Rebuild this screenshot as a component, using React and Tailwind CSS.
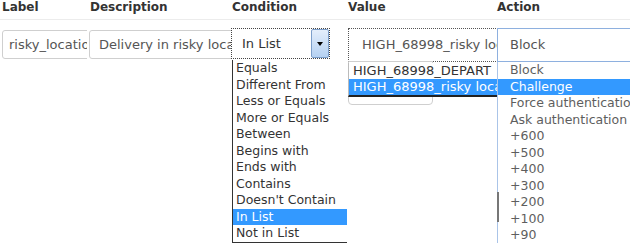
import React from 'react';

const conditions = ['Equals', 'Different From', 'Less or Equals', 'More or Equals', 'Between', 'Begins with', 'Ends with', 'Contains', "Doesn't Contain", 'In List', 'Not in List'];
const values = ['HIGH_68998_DEPART', 'HIGH_68998_risky location'];
const actions = ['Block', 'Challenge', 'Force authentication', 'Ask authentication', '+600', '+500', '+400', '+300', '+200', '+100', '+90'];

export default function App() {
    return (
        <div className="relative w-[630px] h-[243px] overflow-hidden bg-white font-['DejaVu_Sans',sans-serif]">
            {/* header */}
            <div className="flex h-[20px] border-b border-[#ececec] text-[12px] leading-[15px] font-bold text-[#333]">
                <div className="w-[88px] shrink-0 pl-[2px]">Label</div>
                <div className="w-[143px] shrink-0 pl-[2px]">Description</div>
                <div className="w-[116px] shrink-0 pl-[1px]">Condition</div>
                <div className="w-[150px] shrink-0 pl-[1px]">Value</div>
                <div className="flex-1 min-w-0">Action</div>
            </div>

            {/* row */}
            <div className="flex pt-[8px]">
                {/* label */}
                <div className="w-[87px] shrink-0 overflow-hidden pt-[2px] pl-[2px]">
                    <div className="w-[120px] h-[29px] border border-[#cfcfcf] rounded-[3px] pl-[6px] text-[13px] leading-[27px] text-[#555] whitespace-nowrap">
                        risky_location
                    </div>
                </div>

                {/* description */}
                <div className="w-[144px] shrink-0 overflow-hidden pt-[2px] pl-[2px]">
                    <div className="w-[200px] h-[29px] border border-[#cfcfcf] rounded-[3px] pl-[9px] text-[13px] leading-[27px] text-[#555] whitespace-nowrap">
                        Delivery in risky location
                    </div>
                </div>

                {/* condition */}
                <div className="relative w-[116px] shrink-0">
                    <div className="flex w-[99px] h-[31px] border border-dotted border-[#444] bg-white">
                        <div className="flex-1 pl-[10px] text-[13px] leading-[29px] text-[#333]">In List</div>
                        <div className="flex w-[18px] h-full items-center justify-center rounded-[2px] border border-[#7d9fcb] bg-gradient-to-b from-[#e4eefb] to-[#b5d1f2]">
                            <div className="w-0 h-0 border-l-[3px] border-r-[3px] border-t-[4px] border-l-transparent border-r-transparent border-t-black" />
                        </div>
                    </div>
                    <div className="absolute left-[1px] top-[32px] w-[115px] border-l border-b border-[#333] bg-white text-[12.5px] text-[#333]">
                        {conditions.map(c => (
                            <div key={c} className={`h-[16.5px] leading-[16.5px] pl-[3px] whitespace-nowrap ${c === 'In List' ? 'bg-[#3399ff] text-white' : ''}`}>
                                {c}
                            </div>
                        ))}
                    </div>
                </div>

                {/* value */}
                <div className="relative w-[150px] shrink-0 overflow-hidden">
                    <div className="ml-[1px] w-[190px] h-[34px] border border-dotted border-[#555] pl-[13px] text-[13px] leading-[32px] text-[#555] whitespace-nowrap">
                        HIGH_68998_risky location
                    </div>
                    <div className="ml-[1px] w-[85px] h-[44px] -mt-[1px] border border-[#cfcfcf] rounded-b-[4px]" />
                    <div className="absolute left-[1px] top-[35px] w-[190px] border-l border-b-2 border-l-[#bbb] border-b-[#222] bg-white text-[13px] text-[#333]">
                        {values.map((v, i) => (
                            <div key={v} className={`h-[16px] leading-[16px] pl-[4px] whitespace-nowrap ${i === 1 ? 'bg-[#3399ff] text-white' : ''}`}>
                                {v}
                            </div>
                        ))}
                    </div>
                </div>

                {/* action */}
                <div className="relative flex-1 min-w-0 overflow-hidden">
                    <div className="w-[160px] h-[34px] border border-[#8eb0df] pl-[12px] text-[13px] leading-[32px] text-[#555] whitespace-nowrap">
                        Block
                    </div>
                    <div className="w-[160px] border-l border-[#aac4e8] bg-white text-[12.5px] text-[#5e5e5e]">
                        {actions.map(a => (
                            <div key={a} className={`h-[16.5px] leading-[16.5px] pl-[12px] whitespace-nowrap ${a === 'Challenge' ? 'bg-[#3399ff] text-white' : ''}`}>
                                {a}
                            </div>
                        ))}
                    </div>
                    <div className="absolute left-0 top-[164px] w-[2px] h-[30px] bg-[#777]" />
                </div>
            </div>
        </div>
    );
}
